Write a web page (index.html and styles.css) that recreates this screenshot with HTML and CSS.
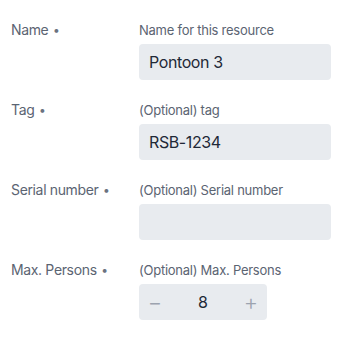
FILE: index.html
```html
<!DOCTYPE html>
<html lang="en">
<head>
    <meta charset="UTF-8">
    <meta name="viewport" content="width=device-width, initial-scale=1.0">
    <title>Resource</title>
    <link rel="stylesheet" href="styles.css">
</head>
<body>
    <form class="resource-form">
        <!-- Name -->
        <div class="field-row">
            <label class="field-label" for="name">Name <span class="dot">•</span></label>
            <div class="field-body">
                <div class="field-hint">Name for this resource</div>
                <input class="field-input" type="text" id="name" value="Pontoon 3" />
            </div>
        </div>

        <!-- Tag -->
        <div class="field-row">
            <label class="field-label" for="tag">Tag <span class="dot">•</span></label>
            <div class="field-body">
                <div class="field-hint">(Optional) tag</div>
                <input class="field-input" type="text" id="tag" value="RSB-1234" />
            </div>
        </div>

        <!-- Serial number -->
        <div class="field-row">
            <label class="field-label" for="serial">Serial number <span class="dot">•</span></label>
            <div class="field-body">
                <div class="field-hint">(Optional) Serial number</div>
                <input class="field-input" type="text" id="serial" value="" />
            </div>
        </div>

        <!-- Max persons -->
        <div class="field-row">
            <label class="field-label" for="persons">Max. Persons <span class="dot">•</span></label>
            <div class="field-body">
                <div class="field-hint">(Optional) Max. Persons</div>
                <div class="stepper">
                    <button type="button" class="stepper-btn">−</button>
                    <span class="stepper-value" id="persons">8</span>
                    <button type="button" class="stepper-btn">+</button>
                </div>
            </div>
        </div>
    </form>
</body>
</html>
```

FILE: styles.css
```css
body {
    margin: 0;
    padding: 20px 11px 0;
    font-family: Inter, "Noto Sans", sans-serif;
    background-color: #ffffff;
    color: #1f2937;
}

.field-row {
    display: flex;
    margin-bottom: 20px;
}

.field-label {
    width: 128px;
    flex-shrink: 0;
    font-size: 14px;
    line-height: 20px;
    letter-spacing: -0.35px;
    color: #5b6472;
}

.dot {
    font-size: 12px;
    vertical-align: 1px;
    margin-left: 1px;
    color: #6b7280;
}

.field-body {
    width: 192px;
}

.field-hint {
    font-size: 13px;
    line-height: 20px;
    letter-spacing: -0.25px;
    color: #5b6472;
    margin-bottom: 4px;
}

.field-input {
    display: block;
    box-sizing: border-box;
    width: 192px;
    height: 36px;
    padding: 0 10px;
    border: none;
    border-radius: 4px;
    background-color: #e8ebef;
    font-family: inherit;
    font-size: 16px;
    letter-spacing: -0.4px;
    color: #1f2937;
    outline: none;
}

.stepper {
    display: flex;
    width: 128px;
    height: 36px;
    border-radius: 4px;
    background-color: #e8ebef;
    align-items: center;
}

.stepper-btn {
    width: 32px;
    height: 36px;
    padding: 0;
    border: none;
    background: none;
    font-family: inherit;
    font-size: 22px;
    font-weight: 300;
    color: #9ca3af;
    cursor: pointer;
}

.stepper-value {
    flex: 1;
    text-align: center;
    font-size: 16px;
    color: #1f2937;
}
```
